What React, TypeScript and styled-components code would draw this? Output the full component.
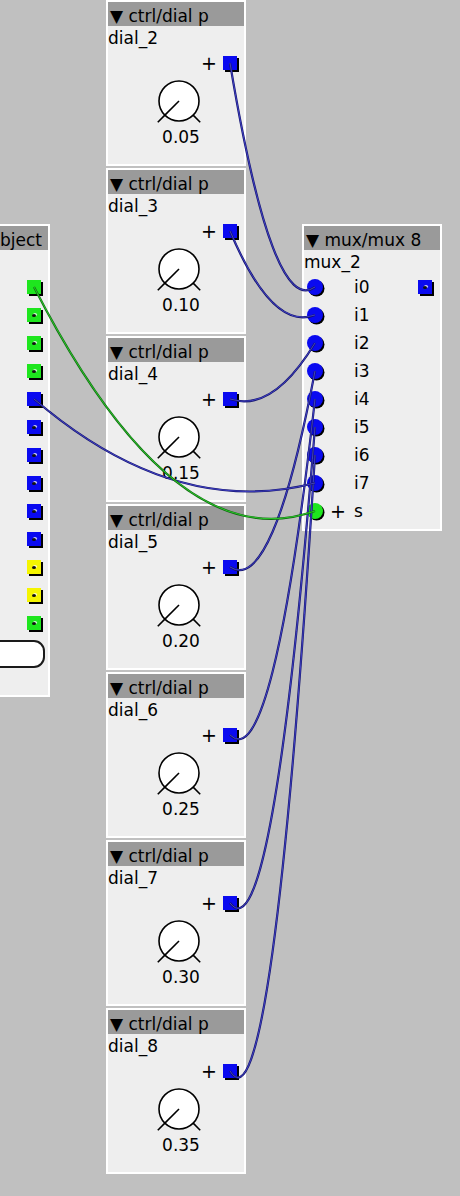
import React from "react";
import styled, { createGlobalStyle } from "styled-components";

const GlobalStyle = createGlobalStyle`
  html, body {
    margin: 0;
    padding: 0;
    background: #c0c0c0;
  }
`;

const Canvas = styled.div`
  position: relative;
  width: 460px;
  height: 1196px;
  overflow: hidden;
  background: #c0c0c0;
  font-family: "DejaVu Sans", "Noto Sans", sans-serif;
  font-size: 17px;
  color: #000;
`;

const ObjectBox = styled.div<{ $x: number; $y: number; $w: number; $h: number }>`
  position: absolute;
  left: ${({ $x }) => $x}px;
  top: ${({ $y }) => $y}px;
  width: ${({ $w }) => $w}px;
  height: ${({ $h }) => $h}px;
  box-sizing: border-box;
  border: 2px solid #ffffff;
  background: #eeeeee;
  display: flex;
  flex-direction: column;
`;

const Header = styled.div`
  flex: none;
  height: 24px;
  line-height: 28px;
  overflow: hidden;
  white-space: nowrap;
  background: #9a9a9a;
  padding-left: 2px;
`;

const InstanceLabel = styled.div`
  flex: none;
  height: 23px;
  line-height: 25px;
  white-space: nowrap;
`;

const OutletRow = styled.div`
  flex: none;
  height: 28px;
  display: flex;
  align-items: center;
  justify-content: flex-end;
  padding-right: 7px;
  gap: 6px;
`;

const Plus = styled.span<{ $hidden?: boolean }>`
  font-size: 19px;
  line-height: 1;
  visibility: ${({ $hidden }) => ($hidden ? "hidden" : "visible")};
`;

const Outlet = styled.div<{ $color: string; $open?: boolean }>`
  position: relative;
  flex: none;
  width: 14px;
  height: 14px;
  background: ${({ $color }) => $color};
  box-shadow: 2px 2px 0 #000;

  &::after {
    content: "";
    display: ${({ $open }) => ($open ? "block" : "none")};
    position: absolute;
    left: 5px;
    top: 6px;
    width: 4px;
    height: 3px;
    border-radius: 50%;
    background: #111;
    box-shadow: 1px -1px 0 rgba(255, 255, 255, 0.8);
  }
`;

const KnobWrap = styled.div`
  flex: none;
  height: 48px;
  margin-left: 46px;
`;

const ValueText = styled.div`
  flex: none;
  width: 50px;
  margin-left: 48px;
  text-align: center;
  line-height: 24px;
`;

const InletRow = styled.div`
  flex: none;
  height: 28px;
  display: flex;
  align-items: center;
  padding-right: 8px;
`;

const Inlet = styled.div<{ $color: string }>`
  flex: none;
  width: 16px;
  height: 16px;
  margin-left: 3px;
  border-radius: 50%;
  background: ${({ $color }) => $color};
  box-shadow: 1.5px 1.5px 0 #000;
`;

const PlusSlot = styled(Plus)`
  width: 14px;
  margin-left: 7px;
`;

const PortName = styled.span`
  margin-left: 10px;
  flex: 1;
`;

const PillButton = styled.div`
  flex: none;
  margin-top: 3px;
  margin-left: -18px;
  width: 65px;
  height: 28px;
  box-sizing: border-box;
  border: 2px solid #1a1a1a;
  border-radius: 11px;
  background: #ffffff;
`;

const WireLayer = styled.svg`
  position: absolute;
  left: 0;
  top: 0;
  pointer-events: none;
  z-index: 5;
`;

const Knob = () => {
  const c = 25;
  const cy = 24;
  const r = 20;
  const d = Math.SQRT1_2;
  return (
    <KnobWrap>
      <svg width="50" height="48" viewBox="0 0 50 48">
        <circle cx={c} cy={cy} r={r} fill="#fff" stroke="#000" strokeWidth="1.6" />
        <line x1={c} y1={cy} x2={c - r * d} y2={cy + r * d} stroke="#000" strokeWidth="1.6" />
        <line x1={c - r * d} y1={cy + r * d} x2={c - 30 * d} y2={cy + 30 * d} stroke="#000" strokeWidth="1.6" />
        <line x1={c + r * d} y1={cy + r * d} x2={c + 30 * d} y2={cy + 30 * d} stroke="#000" strokeWidth="1.6" />
      </svg>
    </KnobWrap>
  );
};

const DIAL_X = 106;
const DIAL_PITCH = 168;
const MUX_X = 302;
const MUX_Y = 224;
const LEFT_X = -4;
const LEFT_Y = 224;

const dials = [
  { name: "dial_2", value: "0.05" },
  { name: "dial_3", value: "0.10" },
  { name: "dial_4", value: "0.15" },
  { name: "dial_5", value: "0.20" },
  { name: "dial_6", value: "0.25" },
  { name: "dial_7", value: "0.30" },
  { name: "dial_8", value: "0.35" },
];

const GREEN = "#1ee61e";
const BLUE = "#0a0af0";
const YELLOW = "#f5f500";

const leftOutlets = [
  { color: GREEN, open: false },
  { color: GREEN, open: true },
  { color: GREEN, open: true },
  { color: GREEN, open: true },
  { color: BLUE, open: false },
  { color: BLUE, open: true },
  { color: BLUE, open: true },
  { color: BLUE, open: true },
  { color: BLUE, open: true },
  { color: BLUE, open: true },
  { color: YELLOW, open: true },
  { color: YELLOW, open: true },
  { color: GREEN, open: true },
];

const muxInlets = ["i0", "i1", "i2", "i3", "i4", "i5", "i6", "i7", "s"];

// port centres, following the box layout above
const dialOut = (k: number) => ({ x: DIAL_X + 2 + 136 - 7 - 7, y: k * DIAL_PITCH + 2 + 24 + 23 + 14 });
const muxIn = (k: number) => ({ x: MUX_X + 2 + 3 + 8, y: MUX_Y + 2 + 24 + 23 + 14 + k * 28 });
const leftOut = (k: number) => ({ x: LEFT_X + 2 + 50 - 7 - 7, y: LEFT_Y + 2 + 24 + 23 + 14 + k * 28 });

type Pt = { x: number; y: number };

// sagging quadratic wire
const wirePath = (a: Pt, b: Pt) => {
  const cx = (a.x + b.x) / 2;
  const cy = Math.max(a.y, b.y) + Math.abs(b.y - a.y) * 0.1 + Math.abs(b.x - a.x) * 0.1;
  return `M ${a.x} ${a.y} Q ${cx} ${cy} ${b.x} ${b.y}`;
};

const wires: { from: Pt; to: Pt; kind: "blue" | "green" }[] = [
  ...dials.map((_, k) => ({ from: dialOut(k), to: muxIn(k), kind: "blue" as const })),
  { from: leftOut(4), to: muxIn(7), kind: "blue" },
  { from: leftOut(0), to: muxIn(8), kind: "green" },
];

const DialObject = ({ index, name, value }: { index: number; name: string; value: string }) => (
  <ObjectBox $x={DIAL_X} $y={index * DIAL_PITCH} $w={140} $h={166}>
    <Header>▼ ctrl/dial p</Header>
    <InstanceLabel>{name}</InstanceLabel>
    <OutletRow>
      <Plus>+</Plus>
      <Outlet $color={BLUE} />
    </OutletRow>
    <Knob />
    <ValueText>{value}</ValueText>
  </ObjectBox>
);

const App = () => {
  return (
    <Canvas>
      <GlobalStyle />
      <ObjectBox $x={LEFT_X} $y={LEFT_Y} $w={54} $h={473}>
        <Header>bject</Header>
        <InstanceLabel />
        {leftOutlets.map((o, i) => (
          <OutletRow key={i}>
            <Outlet $color={o.color} $open={o.open} />
          </OutletRow>
        ))}
        <PillButton />
      </ObjectBox>

      {dials.map((d, i) => (
        <DialObject key={d.name} index={i} name={d.name} value={d.value} />
      ))}

      <ObjectBox $x={MUX_X} $y={MUX_Y} $w={140} $h={307}>
        <Header>▼ mux/mux 8</Header>
        <InstanceLabel>mux_2</InstanceLabel>
        {muxInlets.map((name, i) => (
          <InletRow key={name}>
            <Inlet $color={name === "s" ? GREEN : BLUE} />
            <PlusSlot $hidden={name !== "s"}>+</PlusSlot>
            <PortName>{name}</PortName>
            {i === 0 && <Outlet $color={BLUE} $open />}
          </InletRow>
        ))}
      </ObjectBox>

      <WireLayer width="460" height="1196" viewBox="0 0 460 1196">
        {wires.map((w, i) => {
          const d = wirePath(w.from, w.to);
          const dark = w.kind === "green" ? "#0f6a0f" : "#14146e";
          const light = w.kind === "green" ? "#2fcf2f" : "#4646cc";
          return (
            <g key={i} fill="none">
              <path d={d} stroke={dark} strokeWidth="2.2" />
              <path d={d} stroke={light} strokeWidth="0.9" />
            </g>
          );
        })}
      </WireLayer>
    </Canvas>
  );
};

export default App;
